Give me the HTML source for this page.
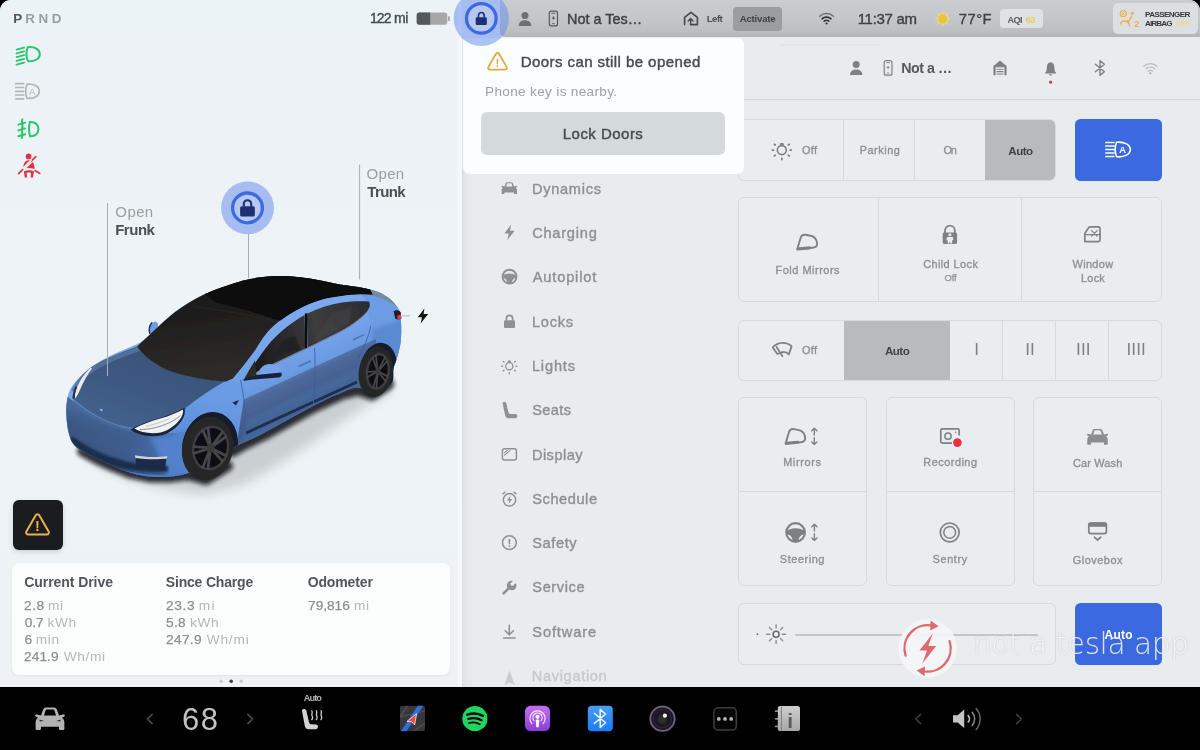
<!DOCTYPE html>
<html lang="en">
<head>
<meta charset="utf-8">
<title>Vehicle Controls</title>
<style>
*{box-sizing:border-box;margin:0;padding:0}
html,body{width:1200px;height:750px;overflow:hidden;background:#000}
body{font-family:"Liberation Sans",sans-serif;color:#4d5255;position:relative}
ul{list-style:none}
i{font-style:normal}
#screen{position:absolute;left:0;top:0;width:1200px;height:687px;overflow:hidden;border-radius:11px 11px 0 0;background:#e9ecee}
.t{position:absolute;white-space:nowrap;line-height:1;display:block}
#left{position:absolute;left:0;top:0;width:462px;height:687px;background:linear-gradient(90deg,rgba(255,255,255,0) 456px,rgba(255,255,255,.5) 460px,rgba(255,255,255,.5) 462px),linear-gradient(180deg,#ecf3f6 0%,#edf3f6 60%,#ecf2f5 100%)}
#lefttop{position:absolute;left:462px;top:0;width:40px;height:38px;background:#edf2f5}
#statusbg{position:absolute;left:500px;top:0;width:700px;height:37.3px;background:linear-gradient(180deg,#cacdcf 0%,#c4c8ca 45%,#bbbfc1 86%,#b1b4b7 100%);border-bottom-left-radius:5px}
#sheet{position:absolute;left:462px;top:37.2px;width:738px;height:650px;background:#e9ecee;border-radius:0 9px 0 0}
#edge{position:absolute;left:0;top:0;width:12px;height:100%;background:linear-gradient(90deg,#dcdfe3 0,#dfe3e6 2px,#e4e8ea 5px,#e9ecee 12px)}
#bg,#popwrap,#wmwrap,.layer{position:absolute;left:0;top:0;width:1200px;height:687px}
.layer{will-change:transform}
#docktxt{height:63px}
#ov,#ov2,#ov3{position:absolute;left:0;top:0;pointer-events:none;will-change:transform}
#activate{position:absolute;left:733.3px;top:7px;width:48.8px;height:23.8px;border-radius:3.5px;background:#9b9d9f}
#aqi{position:absolute;left:999.6px;top:9.2px;width:43.8px;height:18.8px;border-radius:3.5px;background:#dfe2e4}
#airbag{position:absolute;left:1112.5px;top:3.4px;width:85px;height:30.8px;border-radius:5.5px;background:#dcdfe1}
#warn{position:absolute;left:12.5px;top:500px;width:50px;height:50px;border-radius:6px;background:#1b1c20;box-shadow:0 2px 5px rgba(60,70,80,.18)}
#stats{position:absolute;left:12px;top:562.6px;width:438px;height:112.6px;border-radius:7px;background:#fbfdfd;box-shadow:0 1px 3px rgba(90,100,110,.10)}
#popup{position:absolute;left:462.6px;top:38px;width:281.4px;height:136.2px;border-radius:0 6px 7px 7px;background:#fafefe}
#lockbtn{position:absolute;left:18.7px;top:74.1px;width:243.7px;height:43.2px;border-radius:6px;background:#d4dadb}
#grab{position:absolute;left:780px;top:44.2px;width:100px;height:1.8px;border-radius:1px;background:#e1e4e6}
#hdrline{position:absolute;left:744px;top:99px;width:456px;height:1px;background:#d3d6d8}
.card{position:absolute;border:1px solid #d6dadc;border-radius:6px;background:#e9edef;overflow:hidden}
.card .vd{position:absolute;top:0;bottom:0;width:1px;background:#d6dadc}
.card .hd{position:absolute;left:0;right:0;height:1px;background:#d6dadc}
.card .sel{position:absolute;top:0;bottom:0;background:#b8bbbe}
#track{position:absolute;left:56px;top:29.6px;width:243px;height:2px;border-radius:1px;background:#c3c6c8}
.blue{position:absolute;border-radius:5.5px;background:#3b69df}
.wmt{text-shadow:0 0 1.5px rgba(110,120,135,.45)}
#dock{position:absolute;left:0;top:687px;width:1200px;height:63px}
#dockbg{position:absolute;left:0;top:0;width:1200px;height:63px;background:#000}
#dv{position:absolute;left:0;top:0;will-change:transform}

</style>
</head>
<body>
<main id="screen">
<div id="bg">
<div id="left"></div>
<div id="lefttop"></div>
<div id="statusbg"></div>
<div id="sheet"><div id="edge"></div></div>

<div id="warn"></div>
<div id="stats"></div>
<div id="activate"></div>
<div id="aqi"></div>
<div id="airbag"></div>
<div id="hdrline"></div>
<div id="grab"></div>
<div class="card" style="left:738px;top:119px;width:318px;height:62px"><i class="sel" style="left:246px;width:71px"></i><i class="vd" style="left:104.4px"></i><i class="vd" style="left:174.8px"></i></div>
<div class="blue" style="left:1075px;top:119px;width:87.4px;height:62px"></div>
<div class="card" style="left:738px;top:197px;width:424px;height:105px"><i class="vd" style="left:138.9px"></i><i class="vd" style="left:281.5px"></i></div>
<div class="card" style="left:738px;top:319.5px;width:424px;height:61px"><i class="sel" style="left:104.6px;width:106.2px"></i><i class="vd" style="left:263.4px"></i><i class="vd" style="left:316.4px"></i><i class="vd" style="left:369.4px"></i></div>
<div class="card" style="left:738px;top:397px;width:128.8px;height:189px"><i class="hd" style="top:92.6px"></i></div>
<div class="card" style="left:886px;top:397px;width:128.8px;height:189px"><i class="hd" style="top:92.6px"></i></div>
<div class="card" style="left:1033.4px;top:397px;width:128.8px;height:189px"><i class="hd" style="top:92.6px"></i></div>
<div class="card" style="left:738px;top:603px;width:318px;height:62px"><i id="track"></i></div>
<div class="blue" style="left:1075px;top:602.5px;width:87.4px;height:62.5px"></div>
</div>
<svg id="ov" width="1200" height="687" viewBox="0 0 1200 687">
<defs>
<filter id="blur6" x="-30%" y="-30%" width="160%" height="160%"><feGaussianBlur stdDeviation="6"/></filter>
<filter id="blur3" x="-30%" y="-30%" width="160%" height="160%"><feGaussianBlur stdDeviation="3"/></filter>
<filter id="blur2" x="-30%" y="-30%" width="160%" height="160%"><feGaussianBlur stdDeviation="2"/></filter>
<filter id="blur1" x="-30%" y="-30%" width="160%" height="160%"><feGaussianBlur stdDeviation="1"/></filter>
<filter id="blur05" x="-30%" y="-30%" width="160%" height="160%"><feGaussianBlur stdDeviation="0.55"/></filter>
<filter id="carsoft" x="-5%" y="-5%" width="110%" height="110%"><feGaussianBlur stdDeviation="0.45"/></filter>
<linearGradient id="gbody" gradientUnits="userSpaceOnUse" x1="262" y1="330" x2="300" y2="420"><stop offset="0" stop-color="#7aa9ee"/><stop offset="0.3" stop-color="#74a3ea"/><stop offset="0.5" stop-color="#6c9ce4"/><stop offset="0.85" stop-color="#5a86cc"/><stop offset="1" stop-color="#4f78bc"/></linearGradient>
<linearGradient id="ghood" gradientUnits="userSpaceOnUse" x1="150" y1="350" x2="120" y2="430"><stop offset="0" stop-color="#3a547a"/><stop offset="0.55" stop-color="#3e5a83"/><stop offset="1" stop-color="#42618e"/></linearGradient>
<linearGradient id="gbumpx" gradientUnits="userSpaceOnUse" x1="70" y1="430" x2="186" y2="450"><stop offset="0" stop-color="#3b5680"/><stop offset="0.5" stop-color="#3f5d8e"/><stop offset="0.8" stop-color="#466ca8"/><stop offset="1" stop-color="#4b77bc"/></linearGradient>
<linearGradient id="gbumpy" gradientUnits="userSpaceOnUse" x1="120" y1="418" x2="108" y2="474"><stop offset="0" stop-color="#5a86c4" stop-opacity="0.35"/><stop offset="0.4" stop-color="#3a5f98" stop-opacity="0"/><stop offset="1" stop-color="#1c2f55" stop-opacity="0.45"/></linearGradient>
<linearGradient id="gbump" gradientUnits="userSpaceOnUse" x1="120" y1="415" x2="104" y2="478"><stop offset="0" stop-color="#4a74b0"/><stop offset="0.45" stop-color="#4169a6"/><stop offset="0.8" stop-color="#37598f"/><stop offset="1" stop-color="#3a62a2"/></linearGradient>
<linearGradient id="gfend" gradientUnits="userSpaceOnUse" x1="200" y1="390" x2="176" y2="478"><stop offset="0" stop-color="#6b9ce6"/><stop offset="0.5" stop-color="#5d8fdb"/><stop offset="1" stop-color="#4a7cc8"/></linearGradient>
<linearGradient id="glow" gradientUnits="userSpaceOnUse" x1="300" y1="372" x2="312" y2="398"><stop offset="0" stop-color="#5575a8"/><stop offset="0.25" stop-color="#4c689a"/><stop offset="0.7" stop-color="#466090"/><stop offset="1" stop-color="#405a8a"/></linearGradient>
<linearGradient id="gglass" gradientUnits="userSpaceOnUse" x1="190" y1="300" x2="200" y2="380"><stop offset="0" stop-color="#1a1a1a"/><stop offset="0.6" stop-color="#272524"/><stop offset="1" stop-color="#2f2c2a"/></linearGradient>
<linearGradient id="gwin" gradientUnits="userSpaceOnUse" x1="250" y1="340" x2="370" y2="310"><stop offset="0" stop-color="#1c1b1c"/><stop offset="0.3" stop-color="#2c2b2d"/><stop offset="0.55" stop-color="#3c3c3f"/><stop offset="1" stop-color="#2c2c2f"/></linearGradient>
<clipPath id="cbody"><path d="M144.0 340.0C149.3 336.2 154.8 329.7 160.0 325.0C165.2 320.3 170.0 315.8 175.0 312.0C180.0 308.2 185.0 305.0 190.0 302.0C195.0 299.0 200.0 296.3 205.0 294.0C210.0 291.7 215.0 289.8 220.0 288.0C225.0 286.2 230.0 284.5 235.0 283.0C240.0 281.5 244.2 280.1 250.0 279.0C255.8 277.9 263.3 276.8 270.0 276.3C276.7 275.9 283.3 275.9 290.0 276.3C296.7 276.7 303.3 277.5 310.0 278.5C316.7 279.5 325.0 281.5 330.0 282.5C335.0 283.5 335.7 283.8 340.0 284.5C344.3 285.2 351.0 286.0 356.0 286.8C361.0 287.6 366.0 288.4 370.0 289.4C374.0 290.4 376.7 291.2 380.0 292.8C383.3 294.4 387.4 297.0 390.0 299.0C392.6 301.0 394.0 303.0 395.6 305.0C397.2 307.0 398.7 308.2 399.6 311.0C400.5 313.8 400.7 318.2 401.0 322.0C401.3 325.8 401.3 330.2 401.2 334.0C401.1 337.8 400.6 342.0 400.2 345.0C399.8 348.0 399.3 349.3 398.6 352.0C397.9 354.7 396.9 358.2 396.0 361.0C395.1 363.8 394.2 365.2 393.4 369.0C392.6 372.8 394.6 380.2 391.0 384.0C387.4 387.8 377.6 391.4 372.0 392.0C366.4 392.6 362.6 387.5 357.6 387.6C352.6 387.7 349.4 389.4 342.0 392.5C334.6 395.6 326.3 399.1 313.0 406.0C299.7 412.9 273.3 428.0 262.0 434.0C250.7 440.0 249.8 439.7 245.0 442.0C240.2 444.3 237.8 444.7 233.0 448.0C228.2 451.3 223.8 457.8 216.0 462.0C208.2 466.2 193.7 471.0 186.0 473.4C178.3 475.8 176.0 475.9 170.0 476.4C164.0 476.9 156.7 477.2 150.0 476.6C143.3 476.0 136.7 474.6 130.0 472.6C123.3 470.6 115.8 467.1 110.0 464.6C104.2 462.1 100.0 460.0 95.0 457.6C90.0 455.2 83.8 452.6 80.0 450.0C76.2 447.4 74.0 445.3 72.0 442.0C70.0 438.7 68.9 434.3 68.0 430.0C67.1 425.7 66.6 420.3 66.4 416.0C66.2 411.7 66.0 408.3 66.6 404.0C67.2 399.7 67.8 394.5 70.0 390.0C72.2 385.5 76.3 380.9 80.0 377.0C83.7 373.1 87.0 369.9 92.0 366.4C97.0 362.9 104.0 359.1 110.0 356.0C116.0 352.9 122.3 350.7 128.0 348.0C133.7 345.3 138.7 343.8 144.0 340.0Z"/></clipPath>
</defs>
<g filter="url(#blur6)" opacity="0.16"><path d="M84 452C106 474 154 490 204 494L244 484C290 460 334 426 368 404L392 392L388 372L300 406L200 446Z" fill="#16181c"/></g>
<g filter="url(#blur2)" opacity="0.85" fill="none" stroke="#0e0f12" stroke-linecap="round" stroke-linejoin="round"><path d="M388 384L372 394.4L358 389.4L342 393.6L313 407L262 435.4L245 443.6L232 451" stroke-width="12"/><path d="M228 466L206 480L188 475L170 477.4L150 477.4L130 473.4L110 465.4L95 458.4L82 451.4" stroke-width="10"/></g>
<g filter="url(#carsoft)">
<ellipse cx="153.4" cy="327.6" rx="3.8" ry="6.6" transform="rotate(30 153.4 327.6)" fill="#6f9ce4"/><path d="M150 334C148.4 330.6 149.2 325.4 152.2 322.2" stroke="#26395f" stroke-width="1.5" fill="none"/>
<path d="M144.0 340.0C149.3 336.2 154.8 329.7 160.0 325.0C165.2 320.3 170.0 315.8 175.0 312.0C180.0 308.2 185.0 305.0 190.0 302.0C195.0 299.0 200.0 296.3 205.0 294.0C210.0 291.7 215.0 289.8 220.0 288.0C225.0 286.2 230.0 284.5 235.0 283.0C240.0 281.5 244.2 280.1 250.0 279.0C255.8 277.9 263.3 276.8 270.0 276.3C276.7 275.9 283.3 275.9 290.0 276.3C296.7 276.7 303.3 277.5 310.0 278.5C316.7 279.5 325.0 281.5 330.0 282.5C335.0 283.5 335.7 283.8 340.0 284.5C344.3 285.2 351.0 286.0 356.0 286.8C361.0 287.6 366.0 288.4 370.0 289.4C374.0 290.4 376.7 291.2 380.0 292.8C383.3 294.4 387.4 297.0 390.0 299.0C392.6 301.0 394.0 303.0 395.6 305.0C397.2 307.0 398.7 308.2 399.6 311.0C400.5 313.8 400.7 318.2 401.0 322.0C401.3 325.8 401.3 330.2 401.2 334.0C401.1 337.8 400.6 342.0 400.2 345.0C399.8 348.0 399.3 349.3 398.6 352.0C397.9 354.7 396.9 358.2 396.0 361.0C395.1 363.8 394.2 365.2 393.4 369.0C392.6 372.8 394.6 380.2 391.0 384.0C387.4 387.8 377.6 391.4 372.0 392.0C366.4 392.6 362.6 387.5 357.6 387.6C352.6 387.7 349.4 389.4 342.0 392.5C334.6 395.6 326.3 399.1 313.0 406.0C299.7 412.9 273.3 428.0 262.0 434.0C250.7 440.0 249.8 439.7 245.0 442.0C240.2 444.3 237.8 444.7 233.0 448.0C228.2 451.3 223.8 457.8 216.0 462.0C208.2 466.2 193.7 471.0 186.0 473.4C178.3 475.8 176.0 475.9 170.0 476.4C164.0 476.9 156.7 477.2 150.0 476.6C143.3 476.0 136.7 474.6 130.0 472.6C123.3 470.6 115.8 467.1 110.0 464.6C104.2 462.1 100.0 460.0 95.0 457.6C90.0 455.2 83.8 452.6 80.0 450.0C76.2 447.4 74.0 445.3 72.0 442.0C70.0 438.7 68.9 434.3 68.0 430.0C67.1 425.7 66.6 420.3 66.4 416.0C66.2 411.7 66.0 408.3 66.6 404.0C67.2 399.7 67.8 394.5 70.0 390.0C72.2 385.5 76.3 380.9 80.0 377.0C83.7 373.1 87.0 369.9 92.0 366.4C97.0 362.9 104.0 359.1 110.0 356.0C116.0 352.9 122.3 350.7 128.0 348.0C133.7 345.3 138.7 343.8 144.0 340.0Z" fill="url(#gbody)"/>
<g clip-path="url(#cbody)">
<path d="M350 283L372 289C388 294 398 302 401 312L402 352L396 376L372 336L366 300Z" fill="#6c9ce4"/>
<path d="M372 330L404 318L404 360L394 384L372 352Z" fill="#5a8ad2" filter="url(#blur2)"/>
<path d="M344 282.6L372 289.6C385 293.6 394 299.6 398 307L386 300.4C378 296.8 372 295.4 366 294.8Z" fill="#7a89a3"/>
<path d="M226 381C236 380 242 380 246 398C248 420 246 440 236 452L214 466L180 478L146 440L184 410C200 398 214 388 226 381Z" fill="url(#gfend)"/>
<path d="M62 392C80 408 104 424 132 430C150 434 170 434 186 432L190 478L150 480C120 476 90 462 66 444Z" fill="url(#gbumpx)"/>
<path d="M62 392C80 408 104 424 132 430C150 434 170 434 186 432L190 478L150 480C120 476 90 462 66 444Z" fill="url(#gbumpy)"/>
<path d="M150 436C164 438 176 436 188 428L206 468L188 476L168 478Z" fill="#5486d4" filter="url(#blur2)" opacity="0.8"/>
<path d="M72 436C90 450 112 459 136 463.6L168 466L168 471.6C150 473.4 128 471 108 464.6C94 459.6 80 451 70 441Z" fill="#1c2d4e" filter="url(#blur1)"/>
<path d="M135.6 458.4H166.4L165 469.6L136 468.8Z" fill="#1c2a46"/>
<path d="M135 455.2C146 457.4 158 457.4 167.2 456L167 458.6C158 459.8 146 459.6 135.2 457.8Z" fill="#d0d3d6"/>
<path d="M96 461C116 470 140 475.4 166 475.2L186 473.4L186 478C160 481 130 478 98 466Z" fill="#4a7dca" filter="url(#blur05)"/>
<path d="M137 346.6C142 354 150 361 166 369C184 376 206 380 226 381C210 390 196 400 184 410C170 416 150 424 134 428C112 426 90 414 72 398C75 384 82 373 92 366.4C106 358.4 122 352 137 346.6Z" fill="url(#ghood)"/>
<path d="M92 366.4C106 358.4 122 352.4 137 347L140 351C125 356 109 362.6 96 370C87 375.6 80 383 76.4 392L71 391C75 381.6 82 373 92 366.4Z" fill="#56749e" opacity="0.85" filter="url(#blur05)"/>
<path d="M74 399C90 414 112 425 134 428L132 432C108 428 86 416 70 402Z" fill="#4a6c9e" filter="url(#blur1)" opacity="0.8"/>
<path d="M226 381.6C214 388.6 200 397.6 186 408.6" stroke="#6e9be0" stroke-width="1.8" fill="none" opacity="0.8" filter="url(#blur05)"/>
<path d="M243.6 399.6L300 373.6L350 350.6L376 339L378 386L357 391L262 436L236 451Z" fill="url(#glow)" filter="url(#blur05)"/>
<path d="M246 420L300 394L372 362L374 388L357 391L262 436L238 450Z" fill="#4a6fa6" opacity="0.55" filter="url(#blur2)"/>
<path d="M246 433L357 382" stroke="#1b2948" stroke-width="3" fill="none" opacity="0.9" filter="url(#blur05)"/>
<path d="M246 440L357 387" stroke="#46679f" stroke-width="2.4" fill="none" opacity="0.9" filter="url(#blur05)"/>
<ellipse cx="210" cy="446" rx="27.6" ry="34.4" transform="rotate(13 210 446)" fill="#141b2b"/>
<ellipse cx="378.4" cy="370" rx="18.6" ry="27.4" transform="rotate(9 378.4 370)" fill="#141b2b"/>
</g>
<g fill="none" stroke="#3a5d9c" stroke-width="0.9" opacity="0.9"><path d="M240.4 380C243.6 392 246 412 245.4 432"/><path d="M314.6 348C315.6 362 315 382 313.4 404"/><path d="M370.6 326C369 336 364 348 358 358"/></g>
<path d="M299.4 366.2L310 361.4" stroke="#5079b8" stroke-width="2" stroke-linecap="round"/><path d="M353.6 339.6L363.4 335" stroke="#5079b8" stroke-width="1.8" stroke-linecap="round"/>
<path d="M232.4 402.6L239 400L236 405.4Z" fill="#1e2a44"/>
<path d="M137 346.4L144.0 340.0C146.7 337.5 154.8 329.7 160.0 325.0C165.2 320.3 170.0 315.8 175.0 312.0C180.0 308.2 185.0 305.0 190.0 302.0C195.0 299.0 200.0 296.3 205.0 294.0C210.0 291.7 215.0 289.8 220.0 288.0C225.0 286.2 230.0 284.5 235.0 283.0C240.0 281.5 244.2 280.1 250.0 279.0C255.8 277.9 263.3 276.8 270.0 276.3C276.7 275.9 283.3 275.9 290.0 276.3C296.7 276.7 303.3 277.5 310.0 278.5C316.7 279.5 325.0 281.5 330.0 282.5C335.0 283.5 335.7 283.8 340.0 284.5C344.3 285.2 351.0 286.0 356.0 286.8C361.0 287.6 367.7 289.0 370.0 289.4L372.6 294.6C366 293.8 360 293.8 355 294.2C345 294.8 335 296.2 325 298.6C314 301.6 304 305.6 295 310.6C284 317 274 324.8 268 331.6C262 339 258 345.4 256 349C248 360 240 370 233 378.4L226 381.4C206 380.4 184 376.4 166 369.4C151 362 142 354 137 346.4Z" fill="url(#gglass)"/>
<path d="M205.0 294.0C207.5 293.0 215.0 289.8 220.0 288.0C225.0 286.2 230.0 284.5 235.0 283.0C240.0 281.5 244.2 280.1 250.0 279.0C255.8 277.9 263.3 276.8 270.0 276.3C276.7 275.9 283.3 275.9 290.0 276.3C296.7 276.7 303.3 277.5 310.0 278.5C316.7 279.5 325.0 281.5 330.0 282.5C335.0 283.5 335.7 283.8 340.0 284.5C344.3 285.2 351.0 286.0 356.0 286.8C361.0 287.6 367.7 289.0 370.0 289.4L372.6 294.6C360 293.6 345 294.6 325 298.6C310 302.6 294 310.6 280 320.8C266 316 240 308 216 302.6Z" fill="#0b0b0b"/>
<path d="M194 306.6C214 309 250 315 278 322" stroke="#2a2826" stroke-width="1" fill="none" opacity="0.8"/>
<path d="M245 377.6C252 368 262 352 270.6 342C280 331.6 292 322 304.6 315L305.4 348.6C290 355.6 268 366.6 245 377.6Z" fill="url(#gwin)"/>
<path d="M306.8 313.8C318 308 330 304.4 342 302.4C352 301 362 300.8 368.8 301.6C370.6 304 370 307.6 367 311.4C360 319.6 348 327.6 334 334.6C324 339.6 314 344.6 307.6 347.6Z" fill="url(#gwin)"/>
<path d="M306 313.4V348.4" stroke="#0d0d0e" stroke-width="2.2"/>
<path d="M274 356C278 344 286 337 295 336L301 350Z" fill="#242326" opacity="0.9" filter="url(#blur05)"/><path d="M312 342L332 314L352 306L350 324Z" fill="#444447" opacity="0.55" filter="url(#blur1)"/>
<path d="M245.6 377.8L305.4 349L334 335C348 328 360 319.8 367 311.8" stroke="#70747b" stroke-width="0.9" fill="none"/>
<path d="M258.4 376.8C258 370 262 365 268 364.2C274 363.6 280 366.6 281.6 371.4C282 374 280.6 375.8 278 376.4Z" fill="#76a3ea"/>
<path d="M243.6 379C248 377 252 375.4 256 375L281.4 372.4C282.4 374.8 281.4 377 278.4 377.6L256.6 379.2C252 379.6 247 380.2 243.6 381Z" fill="#172038"/>
<path d="M244.6 378.6C248 372 251.6 366 255 360.6L256.4 374.8Z" fill="#2a2926"/>
<path d="M393.6 311.2C396 309.8 398.6 310.2 400.6 312.2L401.4 318.4C399 320 396.8 319.8 395.2 318.4Z" fill="#2a1c22"/><path d="M397.4 315.4L400.8 314.4L401.3 318.6C399.8 319.6 398.4 319.4 397.4 318.6Z" fill="#d9404a"/>
<path d="M130.6 429.6C139 424.4 150 420.8 160 418C170 414.8 178 411.4 184.4 407.8C185.6 411.6 184.6 416.6 181.4 421C177.2 427.2 170 433 162 435.2C152 437.4 138 436 130.6 429.6Z" fill="#1b2437"/>
<path d="M134.4 428.6C142 424.4 151 421.2 160.4 418.6C170 415.6 177.6 412.4 183 409.4C183.6 412.6 182.2 416.2 179.6 419.8C175.6 425.2 169 430.4 161.8 432.2C152.8 434.2 141.4 433.2 134.4 428.6Z" fill="#f0f1f2"/>
<path d="M140 429.6C150 429.6 162 426.6 172 421.4C175 419.8 178 417.6 180.4 415.6" stroke="#8c8f92" stroke-width="1" fill="none"/><path d="M146 426.4C154 424.6 162 422 170 418.4" stroke="#b9bcbe" stroke-width="0.8" fill="none"/>
<path d="M90.4 367.8C84 374 78 383 75.4 392C74.6 395.4 74.4 397.6 75 398.8C77 396.6 78.6 393 80.6 388.6C83.6 381.6 87.6 374 92 368.6Z" fill="#e8eaec"/><path d="M74.2 398.4C73.4 395 74.4 391 76.4 386.6" stroke="#222c45" stroke-width="1.8" fill="none"/>
<path d="M99.2 408.8L103.2 409.4L101.4 411.8Z" fill="#9db0cc"/>
<g><ellipse cx="207.6" cy="448.4" rx="25.4" ry="32" transform="rotate(13 207.6 448.4)" fill="#262628"/><g transform="rotate(13 210.6 448)"><ellipse cx="210.6" cy="448" rx="18.2" ry="22.4" fill="#101012"/><ellipse cx="210.6" cy="448" rx="17.2" ry="21.4" fill="none" stroke="#3e3e42" stroke-width="2.4"/><path d="M210.6 448.0L226.9 452.0" stroke="#47474b" stroke-width="2.73" stroke-linecap="round"/><path d="M210.6 448.0L225.1 458.1" stroke="#47474b" stroke-width="2.73" stroke-linecap="round"/><path d="M210.6 448.0L212.6 468.6" stroke="#47474b" stroke-width="2.73" stroke-linecap="round"/><path d="M210.6 448.0L207.4 468.4" stroke="#47474b" stroke-width="2.73" stroke-linecap="round"/><path d="M210.6 448.0L195.6 456.8" stroke="#47474b" stroke-width="2.73" stroke-linecap="round"/><path d="M210.6 448.0L194.1 450.5" stroke="#47474b" stroke-width="2.73" stroke-linecap="round"/><path d="M210.6 448.0L199.3 432.8" stroke="#47474b" stroke-width="2.73" stroke-linecap="round"/><path d="M210.6 448.0L203.6 429.1" stroke="#47474b" stroke-width="2.73" stroke-linecap="round"/><path d="M210.6 448.0L218.6 429.8" stroke="#47474b" stroke-width="2.73" stroke-linecap="round"/><path d="M210.6 448.0L222.7 433.8" stroke="#47474b" stroke-width="2.73" stroke-linecap="round"/><ellipse cx="210.6" cy="448" rx="4.00" ry="4.93" fill="#3a3a3d"/></g></g>
<g><ellipse cx="375.8" cy="371.8" rx="17" ry="25.6" transform="rotate(9 375.8 371.8)" fill="#262628"/><g transform="rotate(9 377.8 371.4)"><ellipse cx="377.8" cy="371.4" rx="11.8" ry="18.4" fill="#101012"/><ellipse cx="377.8" cy="371.4" rx="10.8" ry="17.4" fill="none" stroke="#3e3e42" stroke-width="2.4"/><path d="M377.8 371.4L387.8 374.6" stroke="#47474b" stroke-width="1.77" stroke-linecap="round"/><path d="M377.8 371.4L386.7 379.5" stroke="#47474b" stroke-width="1.77" stroke-linecap="round"/><path d="M377.8 371.4L379.0 388.1" stroke="#47474b" stroke-width="1.77" stroke-linecap="round"/><path d="M377.8 371.4L375.9 387.9" stroke="#47474b" stroke-width="1.77" stroke-linecap="round"/><path d="M377.8 371.4L368.6 378.5" stroke="#47474b" stroke-width="1.77" stroke-linecap="round"/><path d="M377.8 371.4L367.7 373.4" stroke="#47474b" stroke-width="1.77" stroke-linecap="round"/><path d="M377.8 371.4L370.8 359.1" stroke="#47474b" stroke-width="1.77" stroke-linecap="round"/><path d="M377.8 371.4L373.5 356.2" stroke="#47474b" stroke-width="1.77" stroke-linecap="round"/><path d="M377.8 371.4L382.7 356.7" stroke="#47474b" stroke-width="1.77" stroke-linecap="round"/><path d="M377.8 371.4L385.3 359.9" stroke="#47474b" stroke-width="1.77" stroke-linecap="round"/><ellipse cx="377.8" cy="371.4" rx="2.60" ry="4.05" fill="#3a3a3d"/></g></g>
</g>
<g stroke="#a9adaf" stroke-width="1" fill="none"><path d="M107.5 203V376"/><path d="M248.5 234V278"/><path d="M359.6 164.5V279.5"/><path d="M402 315.8H410" stroke="#b5b8ba"/></g>
<g stroke="#2dc46c" stroke-width="2" fill="none" stroke-linecap="round" stroke-linejoin="round"><path d="M16.6 49.6L24 47.6M16.6 53.4L24 51.4M16.6 57.1L24 55.1M16.6 60.9L24 58.9M16.6 64.6L24 62.6"/><path d="M27.6 47.2C35 46.6 39.8 49.5 39.8 54.2C39.8 58.6 35.2 61.6 28 61.2C26.2 57 26.2 51.4 27.6 47.2Z"/></g>
<g stroke="#b3b7b9" stroke-width="1.7" fill="none" stroke-linecap="round" stroke-linejoin="round"><path d="M15.6 83.7H23.6M15.6 87.5H23.6M15.6 91.3H23.6M15.6 95H23.6M15.6 98.8H23.6"/><path d="M27 84.3C34.6 83.6 39.3 86.6 39.3 91.3C39.3 95.8 34.6 98.9 27 98.4C25.3 94.2 25.3 88.6 27 84.3Z"/></g><text x="32.3" y="94.9" font-size="9.6" text-anchor="middle" fill="#b3b7b9" font-family="Liberation Sans, sans-serif">A</text>
<g stroke="#2dc46c" stroke-width="2" fill="none" stroke-linecap="round" stroke-linejoin="round"><path d="M22.3 119.3C21 122.5 23.6 125 22.2 128.6C21 132 23.4 134.6 21.8 138"/><path d="M18.4 124.6L25.2 122.6M18.4 130.4L25.2 128.4M18.4 136.2L25.2 134.2"/><path d="M29.8 122C35.4 121.6 38.4 124.6 38.4 129.2C38.4 133.6 35.2 136.6 30 136.2C28.8 132 28.8 126.4 29.8 122Z"/></g>
<g fill="#dc3545" stroke="none"><circle cx="28.6" cy="156.4" r="2.9"/><path d="M23.2 168.9C23.2 163.6 25.2 160.2 28.6 160.2C32.4 160.2 34.6 163.6 34.6 168.9C31 167.7 26.6 167.7 23.2 168.9Z"/><path d="M23.8 171.2C27 169.9 31 169.9 34 171.2L33 177.4H30.6L31 172.9C29.6 172.5 28 172.5 26.6 172.9L27.2 177.4H24.8Z"/></g><path d="M18.6 173.6L35.8 156.6" stroke="#edf2f5" stroke-width="3.2" stroke-linecap="round"/><path d="M18.6 173.6L22.6 169.6M31 161.3L35.8 156.6M35 170.6L39.8 173.4" stroke="#dc3545" stroke-width="1.7" stroke-linecap="round" fill="none"/><path d="M23.2 168.6L31.4 160.6" stroke="#f6dfe0" stroke-width="1.3" stroke-linecap="round"/>
<g><rect x="416.7" y="12.4" width="30.6" height="12.3" rx="2.6" fill="#a5a7a9"/><path d="M419.3 12.4H430.2V24.7H419.3A2.6 2.6 0 0 1 416.7 22.1V15A2.6 2.6 0 0 1 419.3 12.4Z" fill="#54595b"/><rect x="448" y="16.2" width="1.9" height="4.8" rx="0.8" fill="#a5a7a9"/></g>
<g><circle cx="247.5" cy="207.9" r="26.4" fill="#6287ee" fill-opacity="0.5"/><circle cx="247.5" cy="207.9" r="14.9" fill="#c3d1f7" fill-opacity="0.55" stroke="#3f6ade" stroke-width="3.3"/><rect x="240.15" y="206.30" width="14.70" height="10.20" rx="1.60" fill="#1d3072"/><path d="M243.80 206.80V203.90A3.70 3.70 0 0 1 251.20 203.90V206.80" fill="none" stroke="#1d3072" stroke-width="2.10"/></g>
<path d="M424.4 308.4L417.8 317.2H422L420.6 323.4L428.2 314H423.6Z" fill="#141414"/>
<g fill="none" stroke="#e9b04d" stroke-width="2" stroke-linecap="round" stroke-linejoin="round"><path d="M35.6 515.4L26.4 531.4C25.6 532.9 26.6 534.6 28.3 534.6H46.7C48.4 534.6 49.4 532.9 48.6 531.4L39.4 515.4C38.6 513.9 36.4 513.9 35.6 515.4Z"/></g><text x="37.5" y="531.2" font-size="14.4" font-weight="700" text-anchor="middle" fill="#e9b04d" font-family="Liberation Sans, sans-serif">!</text>
<circle cx="221.2" cy="681.2" r="1.7" fill="#c8cbcd"/><circle cx="231.2" cy="681.2" r="1.8" fill="#3a3d40"/><circle cx="241.2" cy="681.2" r="1.7" fill="#c8cbcd"/>
<g fill="#6c7073"><circle cx="525" cy="15.6" r="3.5"/><path d="M518.7 26C518.7 22.4 521.4 20.3 525 20.3C528.6 20.3 531.3 22.4 531.3 26Z"/></g>
<g fill="none" stroke="#55595c" stroke-width="1.2" stroke-linejoin="round"><rect x="549.3" y="11.2" width="8.2" height="14.6" rx="2"/><path d="M551.4 13.2H555.4M552.2 23.6H554.6" stroke-width="0.9"/><path d="M553.4 16.4V19.6M551.8 18H555" stroke-width="1"/></g>
<g fill="none" stroke="#43484b" stroke-width="1.6" stroke-linejoin="round" stroke-linecap="round"><path d="M684.6 24.6V17.4L691 12.4L697.4 17.4V24.6H690.6"/><path d="M690.6 24.6V19M688.2 21L690.6 18.6L693 21" stroke-width="1.4"/></g>
<g fill="none" stroke-linecap="round"><path d="M819.6 16.2C823.4 12.6 829.6 12.6 833.4 16.2" stroke="#6c7073" stroke-width="1.5"/><path d="M822 18.8C824.4 16.6 828.6 16.6 831 18.8" stroke="#2e3235" stroke-width="1.6"/><path d="M824.2 21.2C825.6 20.1 827.4 20.1 828.8 21.2" stroke="#2e3235" stroke-width="1.6"/></g><circle cx="826.5" cy="23.5" r="1.1" fill="#2e3235"/>
<g stroke="#ecd27a" stroke-width="1.6" stroke-linecap="round" opacity="0.9"><path d="M942.7 18.7L950.5 18.7"/><path d="M942.7 18.7L948.2 24.2"/><path d="M942.7 18.7L942.7 26.5"/><path d="M942.7 18.7L937.2 24.2"/><path d="M942.7 18.7L934.9 18.7"/><path d="M942.7 18.7L937.2 13.2"/><path d="M942.7 18.7L942.7 10.9"/><path d="M942.7 18.7L948.2 13.2"/></g><circle cx="942.7" cy="18.7" r="4.3" fill="#efc32a"/><circle cx="942.7" cy="18.7" r="5.6" fill="none" stroke="#e8d9a0" stroke-width="1" opacity="0.7"/>
<g fill="none" stroke="#eeb04e" stroke-width="1.5" stroke-linecap="round" stroke-linejoin="round"><circle cx="1123.3" cy="13.6" r="3.1" stroke-width="1.2"/><path d="M1121.3 11.6L1125.3 15.6M1125.3 11.6L1121.3 15.6" stroke-width="1"/><circle cx="1132.2" cy="13.2" r="1.5" fill="#eeb04e" stroke="none"/><path d="M1120.6 23.8C1121 21.4 1123.2 20.6 1125.4 21.2L1128.2 22.2L1131.6 16.4"/><path d="M1127.6 20.4L1129.6 25.6"/></g>
<text x="1134.3" y="27.3" font-size="9" font-weight="700" fill="#eeb04e" font-family="Liberation Sans, sans-serif">2</text>
<g fill="#8d9194" stroke="none">
<path d="M504.50 186.55L505.62 183.48C505.94 182.54 506.58 182.30 507.70 182.30H510.90C512.02 182.30 512.66 182.54 512.98 183.48L514.10 186.55L516.82 185.84L517.30 186.78L515.70 187.73C516.66 188.44 516.98 189.38 516.98 190.56V193.51C516.98 193.86 516.82 194.10 516.34 194.10H514.74C514.26 194.10 514.10 193.86 514.10 193.51V192.45H504.50V193.51C504.50 193.86 504.34 194.10 503.86 194.10H502.26C501.78 194.10 501.62 193.86 501.62 193.51V190.56C501.62 189.38 501.94 188.44 502.90 187.73L501.30 186.78L501.78 185.84ZM506.10 186.55H512.50L511.70 183.95C511.54 183.48 511.22 183.36 510.74 183.36H507.86C507.38 183.36 507.06 183.48 506.90 183.95Z" fill="#8d9194" fill-rule="evenodd"/>
<path d="M510.9 224.8L504.4 233.6H508.7L507.5 240L514.7 230.8H510.1Z"/>
<g><circle cx="509.5" cy="276.7" r="6.95" fill="none" stroke="#8d9194" stroke-width="1.9"/><path d="M502.80 275.75C505.94 272.75 513.05 272.75 516.20 275.75L516.00 277.96C513.45 278.28 512.03 279.86 511.55 283.40H507.45C506.97 279.86 505.55 278.28 503.00 277.96Z" fill="#8d9194"/></g>
<rect x="504" y="320.2" width="11" height="7.9" rx="1.3"/><path d="M506.4 320.6V318.4A3.1 3.1 0 0 1 512.6 318.4V320.6" fill="none" stroke="#8d9194" stroke-width="1.7"/>
<g fill="none" stroke="#8d9194" stroke-width="1.28" stroke-linecap="round"><circle cx="509.3" cy="366.16" r="3.60"/><path d="M508.18 362.32V360.88H510.42V362.32" fill="#8d9194" stroke-width="0.80"/><path d="M514.53 362.07L515.29 361.48" stroke-width="1.36"/><path d="M515.94 366.16L516.90 366.16" stroke-width="1.36"/><path d="M514.53 370.25L515.29 370.84" stroke-width="1.36"/><path d="M509.30 372.80L509.30 373.76" stroke-width="1.36"/><path d="M504.07 370.25L503.31 370.84" stroke-width="1.36"/><path d="M502.66 366.16L501.70 366.16" stroke-width="1.36"/><path d="M504.07 362.07L503.31 361.48" stroke-width="1.36"/></g>
<path d="M503.6 401.9C505.2 401.6 506.1 402.3 506.4 403.8L508.4 412.2C508.7 413.4 509.5 414 510.7 414L515.4 414.1C516.8 414.1 517.5 415 517.3 416.3C517.1 417.5 516.3 418.2 515 418.2L509 418.3C506.8 418.3 505.6 417.3 505.1 415.2L502.8 404.3C502.5 403 502.6 402.2 503.6 401.9Z"/>
</g>
<g fill="none" stroke="#8d9194" stroke-width="1.5" stroke-linecap="round"><rect x="502.4" y="448.7" width="14" height="11.3" rx="2"/><path d="M504.6 452.6L507.2 450.4M504.6 455.2L510 450.6" stroke-width="1.1"/></g>
<g fill="none" stroke="#8d9194" stroke-width="1.5" stroke-linecap="round"><circle cx="509.5" cy="499.8" r="6.2"/><path d="M503 493.8L504.8 492.2M516 493.8L514.2 492.2"/></g><path d="M510.4 495.8L506.9 500.6H509.3L508.6 503.9L512.2 499H509.8Z" fill="#8d9194"/>
<g fill="none" stroke="#8d9194" stroke-width="1.5" stroke-linecap="round"><circle cx="509.4" cy="542.7" r="6.9"/></g><text x="509.4" y="546.9" font-size="11.6" font-weight="700" text-anchor="middle" fill="#8d9194" font-family="Liberation Sans, sans-serif">!</text>
<g><path d="M503.6 593.4L510.4 586.6" stroke="#8d9194" stroke-width="2.6" stroke-linecap="round" fill="none"/><path d="M515.9 582.4L513.2 585.1L511.4 584.6L510.9 582.8L513.6 580.1C511.8 579.6 509.8 580.1 508.6 581.5C507.2 583.1 507.1 585.4 508.2 587.2L509.8 588.8C511.6 589.9 513.9 589.8 515.5 588.4C516.9 587.2 517.4 585.2 516.9 583.4Z" fill="#8d9194" transform="translate(-0.6,0.8)"/></g>
<g fill="none" stroke="#8d9194" stroke-width="1.6" stroke-linecap="round" stroke-linejoin="round"><path d="M509.3 625.4V634.6M505.2 630.8L509.3 634.8L513.4 630.8M503.6 638H515"/></g>
<path d="M509.5 670.4L514.8 685.2L509.5 682.6L504.3 685.2Z" fill="#c9cccf"/>
<g fill="#7d8184"><circle cx="856.2" cy="64.6" r="3.5"/><path d="M850 75C850 71.4 852.6 69.4 856.2 69.4C859.8 69.4 862.4 71.4 862.4 75Z"/></g>
<g fill="none" stroke="#7d8184" stroke-width="1.2" stroke-linejoin="round"><rect x="884.2" y="60.6" width="7.8" height="14.6" rx="2"/><path d="M886.2 62.6H890M887 73H889.2" stroke-width="0.9"/><path d="M888.1 66V68.8M886.7 67.4H889.5" stroke-width="1"/></g>
<g><path d="M993.4 75.2V66L1000 60.4L1006.6 66V75.2H1004.4V67.2H995.6V75.2Z" fill="#7d8184"/><path d="M996.6 69.2H1003.4M996.6 71.6H1003.4M996.6 74H1003.4" stroke="#7d8184" stroke-width="1.1" fill="none"/></g>
<g fill="#7d8184"><path d="M1045.2 72.6C1046.6 71.4 1046.8 69.8 1046.8 67.4C1046.8 64.4 1048.2 62.2 1050.6 62.2C1053 62.2 1054.4 64.4 1054.4 67.4C1054.4 69.8 1054.6 71.4 1056 72.6V73.4H1045.2Z"/><path d="M1049.2 74.2H1052C1052 75 1051.4 75.6 1050.6 75.6C1049.8 75.6 1049.2 75 1049.2 74.2Z"/></g><circle cx="1050.6" cy="82.2" r="1.6" fill="#d93a4a"/>
<path d="M1095.4 64.2L1104.4 71.8L1100 75.4V60.6L1104.4 64.2L1095.4 71.8" fill="none" stroke="#7d8184" stroke-width="1.4" stroke-linejoin="round" stroke-linecap="round"/>
<g fill="none" stroke="#b9bcbe" stroke-width="1.3" stroke-linecap="round"><path d="M1143.8 66.4C1147.4 62.8 1153.4 62.8 1157 66.4"/><path d="M1146 68.8C1148.4 66.6 1152.4 66.6 1154.8 68.8"/><path d="M1148.2 71.2C1149.6 70.2 1151.2 70.2 1152.6 71.2"/></g><circle cx="1150.4" cy="73.2" r="1" fill="#a0a3a5"/>
<g fill="none" stroke="#7d8184" stroke-width="1.60" stroke-linecap="round"><circle cx="781.8" cy="150.10" r="4.50"/><path d="M780.40 145.30V143.50H783.20V145.30" fill="#7d8184" stroke-width="1.00"/><path d="M788.34 144.99L789.29 144.25" stroke-width="1.70"/><path d="M790.10 150.10L791.30 150.10" stroke-width="1.70"/><path d="M788.34 155.21L789.29 155.95" stroke-width="1.70"/><path d="M781.80 158.40L781.80 159.60" stroke-width="1.70"/><path d="M775.26 155.21L774.31 155.95" stroke-width="1.70"/><path d="M773.50 150.10L772.30 150.10" stroke-width="1.70"/><path d="M775.26 144.99L774.31 144.25" stroke-width="1.70"/></g>
<g fill="none" stroke="#ffffff" stroke-width="1.61" stroke-linecap="round" stroke-linejoin="round"><path d="M1105.80 142.47H1113.97M1105.80 145.98H1113.97M1105.80 149.50H1113.97M1105.80 153.01H1113.97M1105.80 156.53H1113.97"/><path d="M1116.63 142.28C1124.61 141.52 1130.31 144.94 1130.31 149.50C1130.31 154.06 1124.61 157.48 1116.63 156.72C1114.73 152.35 1114.73 146.65 1116.63 142.28Z"/></g><text x="1122.61" y="152.82" font-size="9.31" font-weight="700" text-anchor="middle" fill="#ffffff" font-family="Liberation Sans, sans-serif">A</text>
<g fill="none" stroke="#7d8184" stroke-width="1.9" stroke-linejoin="round" stroke-linecap="round"><path d="M797.90 246.86L800.92 237.00C801.78 234.96 803.08 234.45 805.67 234.79L811.72 235.98C815.18 237.00 817.34 240.74 817.12 244.14C816.90 246.52 815.18 247.54 812.58 247.71L797.90 248.90Z"/><path d="M797.68 248.90L809.56 247.88" stroke-width="3.04"/></g>
<g><path d="M945 233V230.6A4.9 4.9 0 0 1 954.8 230.6V233" fill="none" stroke="#7d8184" stroke-width="1.8"/><path fill-rule="evenodd" fill="#7d8184" d="M944.4 232.4H955.4C956.4 232.4 957.1 233.1 957.1 234.1V242.3C957.1 243.3 956.4 244 955.4 244H944.4C943.4 244 942.7 243.3 942.7 242.3V234.1C942.7 233.1 943.4 232.4 944.4 232.4ZM949.9 233.2A1.5 1.5 0 1 0 949.9 236.2A1.5 1.5 0 1 0 949.9 233.2ZM947 237H952.8L953.4 240.2H952.2L952 243.4H950.4L949.9 241L949.4 243.4H947.8L947.6 240.2H946.4Z"/></g>
<g fill="none" stroke="#7d8184" stroke-width="1.7" stroke-linejoin="round" stroke-linecap="round"><path d="M1084.8 241.6V233.4L1088.8 227.6C1089.2 227 1089.8 226.8 1090.4 226.8H1098.4C1099.4 226.8 1100 227.4 1100 228.4V240C1100 241 1099.4 241.6 1098.4 241.6Z"/><path d="M1085 234.6H1100" stroke-width="1.4"/><path d="M1091.6 230.6L1097.2 236.2M1097.2 230.6L1091.6 236.2" stroke-width="1.2"/></g>
<g fill="none" stroke="#7d8184" stroke-width="1.8" stroke-linejoin="round" stroke-linecap="round"><path d="M772.8 347.4C778 341.6 786.6 341.6 791.6 346.4L788.8 354.4C787.4 352.6 785.4 351.8 783.4 351.8L777.4 354Z"/><path d="M776.6 347L782.4 356.2" stroke-width="1.7"/></g>
<g fill="none" stroke="#7d8184" stroke-width="1.9" stroke-linejoin="round" stroke-linecap="round"><path d="M786.27 441.32L789.24 431.34C790.09 429.28 791.36 428.76 793.90 429.10L799.84 430.31C803.23 431.34 805.35 435.12 805.14 438.56C804.93 440.97 803.23 442.00 800.69 442.18L786.27 443.38Z"/><path d="M786.06 443.38L797.72 442.35" stroke-width="3.04"/></g>
<g fill="none" stroke="#7d8184" stroke-width="1.4" stroke-linecap="round" stroke-linejoin="round"><path d="M814.3 428.20V435.00M811.70 430.80L814.3 428.20L816.90 430.80"/><path d="M814.3 444.60V437.80M811.70 442.00L814.3 444.60L816.90 442.00"/></g>
<g fill="none" stroke="#7d8184" stroke-width="1.7" stroke-linejoin="round"><path d="M952 443.2H942.4C941.4 443.2 940.8 442.6 940.8 441.6V430.4C940.8 429.4 941.4 428.8 942.4 428.8H957.6C958.6 428.8 959.2 429.4 959.2 430.4V435.6"/><circle cx="948" cy="436.2" r="3.1" stroke-width="1.5"/></g><circle cx="955.6" cy="432.2" r="0.8" fill="#7d8184"/><circle cx="957.4" cy="442.6" r="4.3" fill="#ea3340"/>
<path d="M1091.08 434.59L1092.58 430.48C1093.01 429.22 1093.86 428.90 1095.36 428.90H1099.64C1101.14 428.90 1101.99 429.22 1102.42 430.48L1103.92 434.59L1107.56 433.64L1108.20 434.90L1106.06 436.17C1107.34 437.12 1107.77 438.38 1107.77 439.96V443.91C1107.77 444.38 1107.56 444.70 1106.92 444.70H1104.78C1104.13 444.70 1103.92 444.38 1103.92 443.91V442.49H1091.08V443.91C1091.08 444.38 1090.87 444.70 1090.22 444.70H1088.08C1087.44 444.70 1087.23 444.38 1087.23 443.91V439.96C1087.23 438.38 1087.66 437.12 1088.94 436.17L1086.80 434.90L1087.44 433.64ZM1093.22 434.59H1101.78L1100.71 431.11C1100.50 430.48 1100.07 430.32 1099.43 430.32H1095.57C1094.93 430.32 1094.50 430.48 1094.29 431.11Z" fill="#8a8e91" fill-rule="evenodd"/>
<g><circle cx="795.6" cy="532.5" r="9.30" fill="none" stroke="#7d8184" stroke-width="2.2"/><path d="M786.40 531.25C790.92 527.30 800.28 527.30 804.80 531.25L804.60 534.16C800.80 534.58 798.93 536.66 798.30 541.70H792.90C792.27 536.66 790.40 534.58 786.60 534.16Z" fill="#7d8184"/></g>
<g fill="none" stroke="#7d8184" stroke-width="1.4" stroke-linecap="round" stroke-linejoin="round"><path d="M814.4 524.20V531.00M811.80 526.80L814.4 524.20L817.00 526.80"/><path d="M814.4 540.60V533.80M811.80 538.00L814.4 540.60L817.00 538.00"/></g>
<g fill="none" stroke="#7d8184"><circle cx="949.7" cy="532.4" r="9.4" stroke-width="1.7"/><circle cx="949.7" cy="532.4" r="5.9" stroke-width="1.5"/></g>
<g><rect x="1088.8" y="523" width="17.6" height="10.6" rx="2" fill="none" stroke="#7d8184" stroke-width="1.7"/><path d="M1088.8 525H1106.4V526.6H1088.8Z" fill="#7d8184"/><path d="M1088.6 524.4C1088.6 523 1089.4 522.2 1090.8 522.2H1104.4C1105.8 522.2 1106.6 523 1106.6 524.4V526.4H1088.6Z" fill="#7d8184"/><path d="M1094.4 537.2L1097.6 540L1100.8 537.2" fill="none" stroke="#7d8184" stroke-width="1.7" stroke-linecap="round" stroke-linejoin="round"/></g>
<circle cx="757.4" cy="634.2" r="0.9" fill="#63676a"/><circle cx="776.1" cy="634.2" r="3" fill="none" stroke="#63676a" stroke-width="1.5"/>
<path d="M782.30 634.20L785.50 634.20M780.48 638.58L782.75 640.85M776.10 640.40L776.10 643.60M771.72 638.58L769.45 640.85M769.90 634.20L766.70 634.20M771.72 629.82L769.45 627.55M776.10 628.00L776.10 624.80M780.48 629.82L782.75 627.55" stroke="#8d9194" stroke-width="1.4" stroke-linecap="round" fill="none"/>
</svg>
<div id="txt" class="layer">
<section id="vehicle" aria-label="Vehicle status">
<span class="t" style="left:13.16px;top:11.56px;font-size:13.4px;color:#4f5458;font-weight:700;">P</span>
<span class="t" style="left:25.34px;top:11.56px;font-size:13.4px;color:#9a9ea1;font-weight:700;">R</span>
<span class="t" style="left:38.56px;top:11.56px;font-size:13.4px;color:#9a9ea1;font-weight:700;">N</span>
<span class="t" style="left:51.66px;top:11.56px;font-size:13.4px;color:#9a9ea1;font-weight:700;">D</span>
<span class="t" style="left:369.89px;top:11.05px;font-size:14px;color:#454a4e;letter-spacing:-0.891px;-webkit-text-stroke:0.4px #454a4e;">122</span>
<span class="t" style="left:394.12px;top:11.05px;font-size:14px;color:#454a4e;letter-spacing:-0.503px;-webkit-text-stroke:0.4px #454a4e;">mi</span>
<span class="t" style="left:115.34px;top:203.50px;font-size:15px;color:#9a9ea0;letter-spacing:0.398px;">Open</span>
<span class="t" style="left:115.13px;top:221.60px;font-size:15px;color:#4b5053;letter-spacing:-0.457px;font-weight:700;">Frunk</span>
<span class="t" style="left:366.55px;top:166.30px;font-size:15px;color:#9a9ea0;letter-spacing:0.311px;">Open</span>
<span class="t" style="left:367.24px;top:183.90px;font-size:15px;color:#4b5053;letter-spacing:-0.604px;font-weight:700;">Trunk</span>
<span class="t" style="left:24.34px;top:575.15px;font-size:14px;color:#50565a;letter-spacing:-0.073px;font-weight:700;">Current Drive</span>
<span class="t" style="left:165.83px;top:575.15px;font-size:14px;color:#50565a;letter-spacing:-0.194px;font-weight:700;">Since Charge</span>
<span class="t" style="left:307.70px;top:575.15px;font-size:14px;color:#50565a;letter-spacing:-0.127px;font-weight:700;">Odometer</span>
<span class="t" style="left:24.12px;top:599.20px;font-size:13.7px;color:#8b8f91;letter-spacing:0.536px;-webkit-text-stroke:0.25px #8b8f91;">2.8</span>
<span class="t" style="left:47.99px;top:599.20px;font-size:13.7px;color:#b4b8ba;letter-spacing:0.720px;">mi</span>
<span class="t" style="left:24.67px;top:616.20px;font-size:13.7px;color:#8b8f91;letter-spacing:-0.058px;-webkit-text-stroke:0.25px #8b8f91;">0.7</span>
<span class="t" style="left:47.61px;top:616.20px;font-size:13.7px;color:#b4b8ba;letter-spacing:0.549px;">kWh</span>
<span class="t" style="left:24.41px;top:633.20px;font-size:13.7px;color:#8b8f91;-webkit-text-stroke:0.25px #8b8f91;">6</span>
<span class="t" style="left:35.65px;top:633.20px;font-size:13.7px;color:#b4b8ba;letter-spacing:0.705px;">min</span>
<span class="t" style="left:24.12px;top:650.20px;font-size:13.7px;color:#8b8f91;letter-spacing:0.055px;-webkit-text-stroke:0.25px #8b8f91;">241.9</span>
<span class="t" style="left:63.68px;top:650.20px;font-size:13.7px;color:#b4b8ba;letter-spacing:0.669px;">Wh/mi</span>
<span class="t" style="left:166.12px;top:599.20px;font-size:13.7px;color:#8b8f91;letter-spacing:0.585px;-webkit-text-stroke:0.25px #8b8f91;">23.3</span>
<span class="t" style="left:198.65px;top:599.20px;font-size:13.7px;color:#b4b8ba;letter-spacing:1.371px;">mi</span>
<span class="t" style="left:165.92px;top:616.20px;font-size:13.7px;color:#8b8f91;letter-spacing:0.395px;-webkit-text-stroke:0.25px #8b8f91;">5.8</span>
<span class="t" style="left:190.08px;top:616.20px;font-size:13.7px;color:#b4b8ba;letter-spacing:0.614px;">kWh</span>
<span class="t" style="left:166.12px;top:633.20px;font-size:13.7px;color:#8b8f91;letter-spacing:0.305px;-webkit-text-stroke:0.25px #8b8f91;">247.9</span>
<span class="t" style="left:206.70px;top:633.20px;font-size:13.7px;color:#b4b8ba;letter-spacing:0.807px;">Wh/mi</span>
<span class="t" style="left:308.06px;top:599.20px;font-size:13.7px;color:#8b8f91;letter-spacing:-0.034px;-webkit-text-stroke:0.25px #8b8f91;">79,816</span>
<span class="t" style="left:353.99px;top:599.20px;font-size:13.7px;color:#b4b8ba;letter-spacing:0.579px;">mi</span>
</section>
<header id="status">
<span class="t" style="left:566.98px;top:11.81px;font-size:14.4px;color:#3e4346;letter-spacing:0.038px;-webkit-text-stroke:0.45px #3e4346;">Not a Tes…</span>
<span class="t" style="left:706.66px;top:13.57px;font-size:9.6px;color:#4a4f52;letter-spacing:-0.478px;font-weight:700;">Left</span>
<span class="t" style="left:739.79px;top:13.77px;font-size:9.6px;color:#3f4447;letter-spacing:-0.215px;font-weight:700;">Activate</span>
<span class="t" style="left:857.67px;top:11.30px;font-size:15px;color:#3e4346;letter-spacing:-0.292px;-webkit-text-stroke:0.4px #3e4346;">11:37 am</span>
<span class="t" style="left:958.81px;top:11.77px;font-size:14.8px;color:#3e4346;letter-spacing:0.446px;-webkit-text-stroke:0.35px #3e4346;">77°F</span>
<span class="t" style="left:1007.56px;top:16.21px;font-size:9.2px;color:#585d60;letter-spacing:-0.605px;font-weight:700;">AQI</span>
<span class="t" style="left:1025.65px;top:16.21px;font-size:9.2px;color:#e6d24c;letter-spacing:-0.410px;font-weight:700;">63</span>
<span class="t" style="left:1144.97px;top:10.94px;font-size:8.1px;color:#34383b;letter-spacing:-0.614px;font-weight:700;">PASSENGER</span>
<span class="t" style="left:1145.01px;top:20.04px;font-size:8.1px;color:#34383b;letter-spacing:-0.886px;font-weight:700;">AIRBAG</span>
<span class="t" style="left:1175.63px;top:20.04px;font-size:8.1px;color:#ecd98a;letter-spacing:-0.808px;font-weight:700;">OFF</span>
</header>
<nav id="menuwrap" aria-label="Settings">
<ul id="menu">
<li class="t" style="left:531.91px;top:182.44px;font-size:14.6px;color:#8d9194;letter-spacing:0.712px;-webkit-text-stroke:0.4px #8d9194;">Dynamics</li>
<li class="t" style="left:532.15px;top:225.74px;font-size:14.6px;color:#8d9194;letter-spacing:0.774px;-webkit-text-stroke:0.4px #8d9194;">Charging</li>
<li class="t" style="left:532.78px;top:270.04px;font-size:14.6px;color:#8d9194;letter-spacing:0.836px;-webkit-text-stroke:0.4px #8d9194;">Autopilot</li>
<li class="t" style="left:531.91px;top:315.34px;font-size:14.6px;color:#8d9194;letter-spacing:0.781px;-webkit-text-stroke:0.4px #8d9194;">Locks</li>
<li class="t" style="left:531.91px;top:358.64px;font-size:14.6px;color:#8d9194;letter-spacing:0.835px;-webkit-text-stroke:0.4px #8d9194;">Lights</li>
<li class="t" style="left:532.31px;top:402.94px;font-size:14.6px;color:#8d9194;letter-spacing:0.334px;-webkit-text-stroke:0.4px #8d9194;">Seats</li>
<li class="t" style="left:531.91px;top:448.24px;font-size:14.6px;color:#8d9194;letter-spacing:0.464px;-webkit-text-stroke:0.4px #8d9194;">Display</li>
<li class="t" style="left:532.31px;top:491.54px;font-size:14.6px;color:#8d9194;letter-spacing:0.553px;-webkit-text-stroke:0.4px #8d9194;">Schedule</li>
<li class="t" style="left:532.31px;top:535.84px;font-size:14.6px;color:#8d9194;letter-spacing:0.582px;-webkit-text-stroke:0.4px #8d9194;">Safety</li>
<li class="t" style="left:532.31px;top:580.14px;font-size:14.6px;color:#8d9194;letter-spacing:0.601px;-webkit-text-stroke:0.4px #8d9194;">Service</li>
<li class="t" style="left:532.31px;top:625.44px;font-size:14.6px;color:#8d9194;letter-spacing:0.877px;-webkit-text-stroke:0.4px #8d9194;">Software</li>
<li class="t" style="left:531.80px;top:668.74px;font-size:14.6px;color:#c6c9cb;letter-spacing:0.658px;-webkit-text-stroke:0.4px #c6c9cb;">Navigation</li>
</ul>
</nav>
<section id="controls" aria-label="Controls">
<span class="t" style="left:901.27px;top:60.88px;font-size:14.2px;color:#53585c;letter-spacing:-0.431px;font-weight:700;">Not a …</span>
<span class="t" style="left:802.02px;top:144.57px;font-size:10.9px;color:#8d9194;letter-spacing:0.365px;-webkit-text-stroke:0.35px #8d9194;">Off</span>
<span class="t" style="left:859.70px;top:144.57px;font-size:10.9px;color:#8d9194;letter-spacing:0.527px;-webkit-text-stroke:0.35px #8d9194;">Parking</span>
<span class="t" style="left:943.39px;top:144.57px;font-size:10.9px;color:#8d9194;letter-spacing:-1.101px;-webkit-text-stroke:0.35px #8d9194;">On</span>
<span class="t" style="left:1008.32px;top:145.38px;font-size:11.6px;color:#3f4447;letter-spacing:-0.514px;font-weight:700;">Auto</span>
<span class="t" style="left:775.52px;top:264.67px;font-size:10.9px;color:#8d9194;letter-spacing:0.540px;-webkit-text-stroke:0.35px #8d9194;">Fold Mirrors</span>
<span class="t" style="left:923.13px;top:258.77px;font-size:10.9px;color:#8d9194;letter-spacing:0.430px;-webkit-text-stroke:0.35px #8d9194;">Child Lock</span>
<span class="t" style="left:944.50px;top:273.24px;font-size:9.4px;color:#8d9194;letter-spacing:-0.070px;-webkit-text-stroke:0.25px #8d9194;">Off</span>
<span class="t" style="left:1072.52px;top:258.77px;font-size:10.9px;color:#8d9194;letter-spacing:0.362px;-webkit-text-stroke:0.35px #8d9194;">Window</span>
<span class="t" style="left:1080.99px;top:273.17px;font-size:10.9px;color:#8d9194;letter-spacing:0.277px;-webkit-text-stroke:0.35px #8d9194;">Lock</span>
<span class="t" style="left:802.02px;top:344.57px;font-size:10.9px;color:#8d9194;letter-spacing:0.365px;-webkit-text-stroke:0.35px #8d9194;">Off</span>
<span class="t" style="left:884.89px;top:345.38px;font-size:11.6px;color:#3f4447;letter-spacing:-0.520px;font-weight:700;">Auto</span>
<span class="t" style="left:974.19px;top:341.14px;font-size:17.2px;color:#7d8184;">I</span>
<span class="t" style="left:1025.25px;top:341.14px;font-size:17.2px;color:#7d8184;letter-spacing:-0.050px;">II</span>
<span class="t" style="left:1076.04px;top:341.14px;font-size:17.2px;color:#7d8184;letter-spacing:0.100px;">III</span>
<span class="t" style="left:1126.52px;top:341.14px;font-size:17.2px;color:#7d8184;letter-spacing:0.050px;">IIII</span>
<span class="t" style="left:783.14px;top:457.17px;font-size:10.9px;color:#8d9194;letter-spacing:0.660px;-webkit-text-stroke:0.35px #8d9194;">Mirrors</span>
<span class="t" style="left:923.36px;top:457.17px;font-size:10.9px;color:#8d9194;letter-spacing:0.496px;-webkit-text-stroke:0.35px #8d9194;">Recording</span>
<span class="t" style="left:1072.94px;top:457.67px;font-size:10.9px;color:#8d9194;letter-spacing:0.181px;-webkit-text-stroke:0.35px #8d9194;">Car Wash</span>
<span class="t" style="left:779.84px;top:553.97px;font-size:10.9px;color:#8d9194;letter-spacing:0.572px;-webkit-text-stroke:0.35px #8d9194;">Steering</span>
<span class="t" style="left:932.62px;top:553.97px;font-size:10.9px;color:#8d9194;letter-spacing:0.610px;-webkit-text-stroke:0.35px #8d9194;">Sentry</span>
<span class="t" style="left:1072.82px;top:554.97px;font-size:10.9px;color:#8d9194;letter-spacing:0.522px;-webkit-text-stroke:0.35px #8d9194;">Glovebox</span>
<span class="t" style="left:1104.51px;top:628.74px;font-size:12px;color:#ffffff;letter-spacing:0.216px;font-weight:700;">Auto</span>
</section>
</div>
<aside id="popwrap" aria-label="Lock status">
<div id="popup"><div id="lockbtn"></div></div>
<svg id="ov2" width="1200" height="687" viewBox="0 0 1200 687">
<g fill="none" stroke="#e2aa3e" stroke-width="1.9" stroke-linecap="round" stroke-linejoin="round"><path d="M495.9 53.9L488.4 66.9C487.7 68.2 488.6 69.6 490 69.6H505C506.4 69.6 507.3 68.2 506.6 66.9L499.1 53.9C498.4 52.7 496.6 52.7 495.9 53.9Z"/></g><text x="497.5" y="67.3" font-size="11.4" font-weight="700" text-anchor="middle" fill="#e2aa3e" font-family="Liberation Sans, sans-serif">!</text>
<g><circle cx="481.3" cy="18.4" r="27.6" fill="#6287ee" fill-opacity="0.5"/><circle cx="481.3" cy="18.4" r="14.8" fill="#c3d1f7" fill-opacity="0.55" stroke="#3f6ade" stroke-width="3.3"/><rect x="475.71" y="17.18" width="11.17" height="7.75" rx="1.22" fill="#1d3072"/><path d="M478.49 17.68V15.36A2.81 2.81 0 0 1 484.11 15.36V17.68" fill="none" stroke="#1d3072" stroke-width="1.60"/></g>
</svg>
<div id="poptxt" class="layer">
<span class="t" style="left:520.79px;top:54.30px;font-size:15px;color:#474c50;letter-spacing:0.427px;-webkit-text-stroke:0.45px #474c50;">Doors can still be opened</span>
<span class="t" style="left:485.11px;top:84.99px;font-size:13.6px;color:#9da1a3;letter-spacing:0.317px;">Phone key is nearby.</span>
<span class="t" style="left:562.79px;top:126.00px;font-size:15px;color:#474c50;letter-spacing:0.469px;-webkit-text-stroke:0.45px #474c50;">Lock Doors</span>
</div>
</aside>
<div id="wmwrap">
<svg id="ov3" width="1200" height="687" viewBox="0 0 1200 687">
<g><circle cx="927.6" cy="648.4" r="29.2" fill="#f4f5f6" fill-opacity="0.93"/><g fill="none" stroke="#dc6a6e" stroke-width="2.3" stroke-linecap="round"><path d="M905.6 655.6A23.2 23.2 0 0 1 932.6 625.8"/><path d="M949.6 641.2A23.2 23.2 0 0 1 922.6 671"/></g><path d="M930.6 620.6L938.6 626.2L930.2 630.4Z" fill="#dc6a6e"/><path d="M924.6 676.2L916.6 670.6L925 666.4Z" fill="#dc6a6e"/><path d="M932.8 633.6L919.4 650.6H927L922.4 663.4L936.2 646H928.4Z" fill="#dc6a6e"/></g>
</svg>
<div id="wmtxt" class="layer">
<span class="t wmt" style="left:972.90px;top:630.14px;font-size:29.6px;color:rgba(255,255,255,0.8);letter-spacing:-0.435px;font-family:'DejaVu Sans','Liberation Sans',sans-serif;font-weight:200;">not a tesla app</span>
</div>
</div>
</main>
<footer id="dock">
<div id="dockbg"></div>
<svg id="dv" width="1200" height="63" viewBox="0 0 1200 63">
<defs><linearGradient id="gpod" x1="0" y1="0" x2="0" y2="1"><stop offset="0" stop-color="#c86ef2"/><stop offset="1" stop-color="#8a3cd6"/></linearGradient><linearGradient id="gbt" x1="0" y1="0" x2="0" y2="1"><stop offset="0" stop-color="#4a9df8"/><stop offset="1" stop-color="#1c7cf4"/></linearGradient><linearGradient id="gman" x1="0" y1="0" x2="0" y2="1"><stop offset="0" stop-color="#cfcfcf"/><stop offset="1" stop-color="#a6a6a6"/></linearGradient><radialGradient id="gcam" cx="0.5" cy="0.5" r="0.5"><stop offset="0" stop-color="#3a4038"/><stop offset="0.35" stop-color="#1c1a22"/><stop offset="0.8" stop-color="#1d1228"/><stop offset="1" stop-color="#2a2034"/></radialGradient><clipPath id="cnav"><rect x="400" y="18.8" width="25" height="25.4" rx="2.2"/></clipPath></defs>
<path d="M41.00 28.54L43.10 22.66C43.70 20.85 44.90 20.40 47.00 20.40H53.00C55.10 20.40 56.30 20.85 56.90 22.66L59.00 28.54L64.10 27.18L65.00 28.99L62.00 30.80C63.80 32.15 64.40 33.96 64.40 36.22V41.87C64.40 42.55 64.10 43.00 63.20 43.00H60.20C59.30 43.00 59.00 42.55 59.00 41.87V39.84H41.00V41.87C41.00 42.55 40.70 43.00 39.80 43.00H36.80C35.90 43.00 35.60 42.55 35.60 41.87V36.22C35.60 33.96 36.20 32.15 38.00 30.80L35.00 28.99L35.90 27.18ZM44.00 28.54H56.00L54.50 23.56C54.20 22.66 53.60 22.43 52.70 22.43H47.30C46.40 22.43 45.80 22.66 45.50 23.56Z" fill="#b3b3b3" fill-rule="evenodd"/>
<path d="M39.4 32.39999999999998L43.8 34L39.6 34.60000000000002ZM60.6 32.39999999999998L56.2 34L60.4 34.60000000000002Z" fill="#2a2a2a"/>
<path d="M152.2 27.4L147.4 32.0L152.2 36.6" fill="none" stroke="#4c4c4c" stroke-width="1.5" stroke-linecap="round" stroke-linejoin="round"/>
<path d="M247.8 27.4L252.6 32.0L247.8 36.6" fill="none" stroke="#4c4c4c" stroke-width="1.5" stroke-linecap="round" stroke-linejoin="round"/>
<g transform="translate(0,-687)"><path d="M303.4 709C305 708.6 306 709.4 306.4 710.8L309 722.2C309.4 723.6 310.2 724.2 311.6 724.2L316 724.4C317.4 724.4 318.2 725.4 318 726.8C317.8 728.2 317 729.2 315.6 729.2L309 729.2C306.6 729.2 305.4 728.2 304.8 726L302.2 712C301.8 710.4 302 709.4 303.4 709Z" fill="#d2d2d2"/><g fill="none" stroke="#d2d2d2" stroke-width="1.3" stroke-linecap="round"><path d="M311.8 710.8C313.2 712.6 310.8 714.4 312.2 716.2C313.2 717.6 312.4 718.6 311.8 719.6"/><path d="M316.4 710.8C317.8 712.6 315.4 714.4 316.8 716.2C317.8 717.6 317 718.6 316.4 719.6"/><path d="M321 710.8C322.4 712.6 320 714.4 321.4 716.2C322.4 717.6 321.6 718.6 321 719.6"/></g></g>
<g clip-path="url(#cnav)"><rect x="400" y="18.8" width="25" height="25.4" fill="#38383a"/><path d="M400 30L425 24M408 18L400 30M414 44.2L425 36" stroke="#4c4c4e" stroke-width="1.6" fill="none"/><path d="M402.6 46L421.6 17" stroke="#2f6fe4" stroke-width="4.6" fill="none"/><path d="M416.6 26.6L414.6 38L411.6 34.6L407 34.4Z" fill="#e8473f" stroke="#f6d9d4" stroke-width="0.9" stroke-linejoin="round"/></g>
<circle cx="474.9" cy="31.7" r="12.6" fill="#1fd45f"/><g fill="none" stroke="#0a0a0a" stroke-linecap="round"><path d="M467.4 27.6C472.6 25.8 478.8 26.4 483 28.8" stroke-width="2.5"/><path d="M468.2 32C472.6 30.6 477.8 31.2 481.6 33.2" stroke-width="2.1"/><path d="M469 36C472.6 35 476.8 35.4 479.8 37.2" stroke-width="1.8"/></g>
<rect x="525" y="18.8" width="25" height="25.3" rx="5.6" fill="url(#gpod)"/><g fill="none" stroke="#f7e6ff" stroke-linecap="round"><path d="M531.9 36.6A7.6 7.6 0 1 1 543.1 36.6" stroke-width="1.2"/><path d="M534 33.6A4.6 4.6 0 1 1 541 33.6" stroke-width="1.2"/></g><circle cx="537.5" cy="29.8" r="2.1" fill="#fff"/><path d="M535.8 33.8C535.8 32.8 536.5 32.4 537.5 32.4C538.5 32.4 539.2 32.8 539.2 33.8L538.8 39.2C538.7 40 538.2 40.4 537.5 40.4C536.8 40.4 536.3 40 536.2 39.2Z" fill="#fff"/>
<rect x="587.8" y="18.8" width="25" height="25.4" rx="4" fill="url(#gbt)"/><path d="M594.4 26.4L605.6 35.8L600.2 40.4V22.4L605.6 27L594.4 36.4" fill="none" stroke="#eef6ff" stroke-width="1.5" stroke-linejoin="round" stroke-linecap="round"/>
<circle cx="662.5" cy="31.7" r="12.2" fill="url(#gcam)" stroke="#6a6472" stroke-width="1.8"/><circle cx="662.5" cy="31.7" r="9" fill="none" stroke="#2f2440" stroke-width="1.2"/><circle cx="662.2" cy="32.6" r="4.2" fill="#2a3328" opacity="0.9"/><circle cx="664.9" cy="28.7" r="2.1" fill="#fff"/>
<rect x="713.9" y="20.7" width="22.4" height="22.4" rx="4.2" fill="#060606" stroke="#3d3d3d" stroke-width="1.5"/><circle cx="718.8" cy="31.9" r="1.9" fill="#b5b5b5"/><circle cx="725" cy="31.9" r="1.9" fill="#b5b5b5"/><circle cx="731.2" cy="31.9" r="1.9" fill="#b5b5b5"/>
<g stroke="#8a8a8a" stroke-width="1.8" stroke-linecap="round"><path d="M775.6 24.2H779.6M775.6 31.8H779.6M775.6 39.4H779.6"/></g><rect x="777.8" y="19" width="22.2" height="25" rx="2.6" fill="url(#gman)"/><path d="M781.4 19.4V43.6" stroke="#7d7d7d" stroke-width="1"/>
<path d="M920.6 27.4L915.8 32.0L920.6 36.6" fill="none" stroke="#3f3f3f" stroke-width="1.5" stroke-linecap="round" stroke-linejoin="round"/>
<path d="M1016.6 27.4L1021.4 32.0L1016.6 36.6" fill="none" stroke="#3f3f3f" stroke-width="1.5" stroke-linecap="round" stroke-linejoin="round"/>
<path d="M953 28.2H957.6L964.2 22.6V41L957.6 35.4H953Z" fill="#c4c4c4"/><g fill="none" stroke-linecap="round"><path d="M968.2 28.6C969.8 30.4 969.8 33.2 968.2 35" stroke="#c4c4c4" stroke-width="1.6"/><path d="M972.2 25.2C975.4 28.8 975.4 34.8 972.2 38.4" stroke="#8c8c8c" stroke-width="1.5"/><path d="M976.2 21.4C981.4 27.2 981.4 36.6 976.2 42.4" stroke="#666" stroke-width="1.5"/></g>
</svg>
<div id="docktxt" class="layer">
<span class="t" style="left:182.11px;top:16.56px;font-size:31px;color:#c2c2c2;letter-spacing:1.337px;">68</span>
<span class="t" style="left:303.77px;top:6.81px;font-size:9.2px;color:#b4b4b4;letter-spacing:-0.914px;font-weight:700;">Auto</span>
<span class="t" style="left:787.29px;top:22.82px;font-size:21px;color:#5a5a5a;font-weight:700;font-family:"Liberation Serif",serif;z-index:3;">i</span>
</div>
</footer>
</body>
</html>
